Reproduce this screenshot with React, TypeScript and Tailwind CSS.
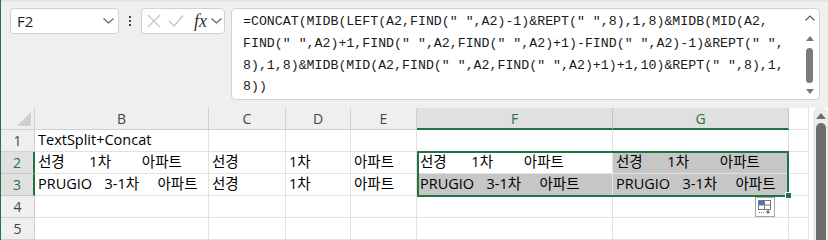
import React from "react";

const colW = [34, 174, 77, 65, 66, 196, 176, 20];
const cellFont = { fontFamily: "'Open Sans', 'Noto Sans CJK KR', sans-serif" };

const rows: { n: number; cells: string[]; gray?: boolean[] }[] = [
  { n: 1, cells: ["TextSplit+Concat", "", "", "", "", "", ""] },
  {
    n: 2,
    cells: ["선경    1차     아파트", "선경", "1차", "아파트", "선경    1차     아파트", "선경    1차     아파트", ""],
    gray: [false, false, false, false, false, true, false],
  },
  {
    n: 3,
    cells: ["PRUGIO  3-1차   아파트", "선경", "1차", "아파트", "PRUGIO  3-1차   아파트", "PRUGIO  3-1차   아파트", ""],
    gray: [false, false, false, false, true, true, false],
  },
  { n: 4, cells: ["", "", "", "", "", "", ""] },
  { n: 5, cells: ["", "", "", "", "", "", ""] },
];

const formulaLines = [
  '=CONCAT(MIDB(LEFT(A2,FIND(" ",A2)-1)&REPT(" ",8),1,8)&MIDB(MID(A2,',
  'FIND(" ",A2)+1,FIND(" ",A2,FIND(" ",A2)+1)-FIND(" ",A2)-1)&REPT(" ",',
  '8),1,8)&MIDB(MID(A2,FIND(" ",A2,FIND(" ",A2)+1)+1,10)&REPT(" ",8),1,',
  "8))",
];

function Chevron({ className = "" }: { className?: string }) {
  return (
    <svg width="11" height="6" viewBox="0 0 11 6" className={className}>
      <path d="M0.5 0.5 L5.5 5 L10.5 0.5" fill="none" stroke="#606060" strokeWidth="1.1" />
    </svg>
  );
}

export default function App() {
  const headers = ["B", "C", "D", "E", "F", "G", ""];
  return (
    <div className="w-[828px] h-[240px] overflow-hidden bg-[#efefef] border-l border-[#217346] flex flex-col">
      {/* Formula bar area */}
      <div className="h-[108px] flex items-start pt-[6px] pl-[9px] border-t-2 border-[#e4e4e4]">
        {/* Name box */}
        <div className="w-[109px] h-[26px] bg-white border border-[#d1d1d1] rounded-[4px] flex items-center pl-[6px] pr-[4px]">
          <span className="text-[15px] text-[#1f1f1f] flex-1" style={{ fontFamily: "'Open Sans', sans-serif" }}>
            F2
          </span>
          <Chevron />
        </div>
        {/* dots */}
        <div className="w-[22px] h-[26px] flex flex-col items-center justify-center gap-[2px]">
          <div className="w-[2px] h-[2px] bg-[#444]" />
          <div className="w-[2px] h-[2px] bg-[#444]" />
          <div className="w-[2px] h-[2px] bg-[#444]" />
        </div>
        {/* cancel / enter / fx */}
        <div className="w-[84px] h-[26px] bg-white border border-[#d1d1d1] rounded-[4px] flex items-center pl-[5px]">
          <svg width="14" height="14" viewBox="0 0 14 14">
            <path d="M1 1 L13 13 M13 1 L1 13" stroke="#c4c4c4" strokeWidth="1.2" />
          </svg>
          <svg width="16" height="14" viewBox="0 0 16 14" className="ml-[7px]">
            <path d="M1 7 L6 12 L15 1.5" fill="none" stroke="#c4c4c4" strokeWidth="1.2" />
          </svg>
          <span
            className="ml-[10px] text-[18px] italic text-[#333] leading-none"
            style={{ fontFamily: "'Liberation Serif', serif" }}
          >
            fx
          </span>
          <Chevron className="ml-[4px]" />
        </div>
        {/* formula box */}
        <div className="ml-[6px] w-[589px] h-[92px] bg-white border border-[#d1d1d1] rounded-[4px] flex">
          <div
            className="flex-1 pl-[11px] pt-[2px] text-[13.25px] leading-[21.8px] text-[#1a1a1a] whitespace-pre"
            style={{ fontFamily: "'Liberation Mono', monospace" }}
          >
            {formulaLines.map((l, i) => (
              <div key={i}>{l}</div>
            ))}
          </div>
          <div className="w-[16px] flex flex-col items-center pr-[3px] pt-[6px]">
            <svg width="10" height="6" viewBox="0 0 10 6">
              <path d="M0.5 5.5 L5 1 L9.5 5.5" fill="none" stroke="#555" strokeWidth="1.1" />
            </svg>
            <svg width="8" height="5" viewBox="0 0 8 5" className="mt-[15px]">
              <path d="M0 5 L4 0 L8 5 Z" fill="#777" />
            </svg>
            <div className="mt-[7px] w-[7px] h-[35px] rounded-full bg-[#7a7a7a]" />
            <svg width="8" height="5" viewBox="0 0 8 5" className="mt-[6px]">
              <path d="M0 0 L4 5 L8 0 Z" fill="#777" />
            </svg>
          </div>
        </div>
      </div>

      {/* Grid area */}
      <div className="flex flex-1">
        <div className="relative w-[808px] bg-white" style={cellFont}>
          {/* header row */}
          <div className="flex h-[22px]">
            <div
              className="relative h-[22px] bg-[#efefef] border-r border-b border-[#d0d0d0]"
              style={{ width: colW[0] }}
            >
              <svg width="14" height="14" viewBox="0 0 14 14" className="absolute right-[3px] bottom-[3px]">
                <path d="M14 0 L14 14 L0 14 Z" fill="#cfcfcf" />
              </svg>
            </div>
            {headers.map((h, i) => {
              const sel = h === "F" || h === "G";
              const blank = h === "";
              return (
                <div
                  key={i}
                  className={`h-[22px] flex items-center justify-center text-[14px] border-r ${
                    sel
                      ? "bg-[#e0e0e0] text-[#217346] border-b-2 border-b-[#217346] border-r-[#c4c4c4]"
                      : blank
                      ? "bg-white border-b border-[#e1e1e1]"
                      : "bg-[#efefef] text-[#444] border-b border-[#d0d0d0]"
                  }`}
                  style={{ width: colW[i + 1] }}
                >
                  {h}
                </div>
              );
            })}
          </div>
          {rows.map((r) => {
            const sel = r.n === 2 || r.n === 3;
            return (
              <div key={r.n} className="flex h-[22px]">
                <div
                  className={`h-[22px] flex items-center justify-center text-[14px] border-b ${
                    sel
                      ? "bg-[#e0e0e0] text-[#217346] border-r-2 border-r-[#217346] border-b-[#c8c8c8]"
                      : "bg-[#efefef] text-[#444] border-r border-[#d0d0d0]"
                  }`}
                  style={{ width: colW[0] }}
                >
                  {r.n}
                </div>
                {r.cells.map((c, i) => (
                  <div
                    key={i}
                    className={`h-[22px] flex items-end pb-[1px] pl-[3px] text-[14.5px] leading-[20px] text-black whitespace-pre overflow-visible border-r border-b border-[#e1e1e1] [word-spacing:2.4px] ${
                      r.gray && r.gray[i] ? "bg-[#c6c6c6]" : ""
                    }`}
                    style={{ width: colW[i + 1] }}
                  >
                    {c}
                  </div>
                ))}
              </div>
            );
          })}
          {/* selection */}
          <div className="absolute left-[416px] top-[43px] w-[372px] h-[46px] border-2 border-[#217346] pointer-events-none" />
          <div className="absolute left-[784px] top-[84px] w-[7px] h-[7px] bg-[#217346] border border-white" />
          {/* quick analysis */}
          <div className="absolute left-[754px] top-[89px] w-[20px] h-[20px] bg-white border border-[#a8a8a8] flex items-center justify-center">
            <svg width="14" height="14" viewBox="0 0 14 14">
              <rect x="0.5" y="0.5" width="12" height="9" fill="white" stroke="#7a7a7a" />
              <rect x="1" y="1" width="6" height="4" fill="#3a78e0" />
              <line x1="0.5" y1="5" x2="12.5" y2="5" stroke="#7a7a7a" />
              <line x1="6.5" y1="0.5" x2="6.5" y2="9.5" stroke="#7a7a7a" />
              <path d="M1 12.5 H6" stroke="#7a7a7a" strokeDasharray="1 1" />
              <path d="M10 10 V14 M8 12 H12" stroke="#555" />
            </svg>
          </div>
        </div>
        {/* vertical scrollbar */}
        <div className="flex-1 bg-white flex">
          <div className="ml-[4px] flex-1 bg-[#ececec] rounded-t-[6px] flex flex-col items-center pt-[5px]">
            <svg width="10" height="6" viewBox="0 0 10 6">
              <path d="M0 6 L5 0 L10 6 Z" fill="#6e6e6e" />
            </svg>
            <div className="mt-[4px] w-[10px] flex-1 bg-[#6e6e6e] rounded-t-full" />
          </div>
        </div>
      </div>
    </div>
  );
}
